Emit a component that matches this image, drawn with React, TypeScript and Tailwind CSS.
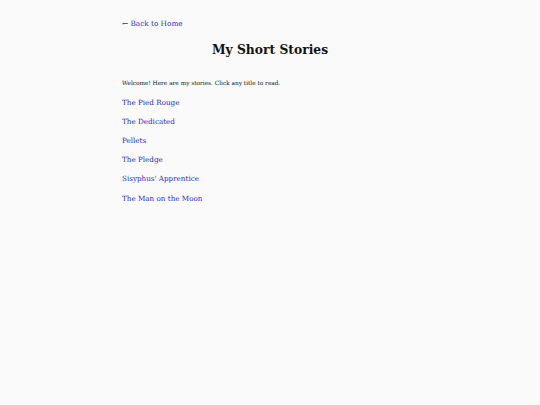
const stories = [
  "The Pied Rouge",
  "The Dedicated",
  "Pellets",
  "The Pledge",
  "Sisyphus' Apprentice",
  "The Man on the Moon",
];

export default function App() {
  return (
    <div className="min-h-[405px] bg-[#fafafa] text-[#111] font-['DejaVu_Serif',Georgia,serif]">
      <div className="w-[296px] mx-auto pt-[17px]">
        <a href="#" className="block text-[7.3px] leading-[14px] text-[#2a2ac8]">
          ← Back to Home
        </a>
        <h1 className="mt-[9px] text-center text-[12.3px] leading-[20px] font-bold">
          My Short Stories
        </h1>
        <p className="mt-[17px] text-[5.8px] leading-[12px]">
          Welcome! Here are my stories. Click any title to read.
        </p>
        <ul className="mt-[3.6px] flex flex-col text-[7.2px] leading-[19.2px]">
          {stories.map((s) => (
            <li key={s}>
              <a href="#" className="text-[#2a2ac8]">
                {s}
              </a>
            </li>
          ))}
        </ul>
      </div>
    </div>
  );
}
